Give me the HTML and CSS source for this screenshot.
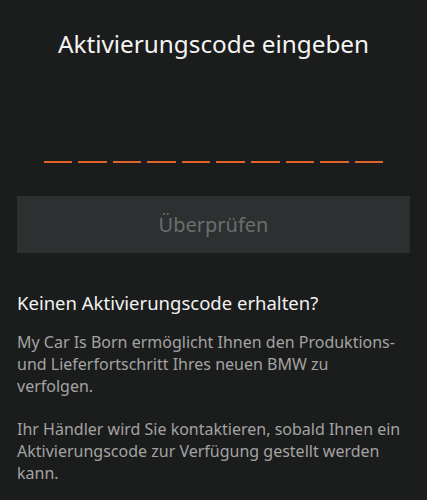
FILE: index.html
```html
<!DOCTYPE html>
<html lang="de">
<head>
    <meta charset="UTF-8">
    <meta name="viewport" content="width=device-width, initial-scale=1.0">
    <title>Aktivierungscode eingeben</title>
    <link rel="stylesheet" href="styles.css">
</head>
<body>
    <div class="screen">
        <h1 class="title">Aktivierungscode eingeben</h1>

        <div class="code-input">
            <span class="slot"></span>
            <span class="slot"></span>
            <span class="slot"></span>
            <span class="slot"></span>
            <span class="slot"></span>
            <span class="slot"></span>
            <span class="slot"></span>
            <span class="slot"></span>
            <span class="slot"></span>
            <span class="slot"></span>
        </div>

        <button class="verify-button" disabled>Überprüfen</button>

        <h2 class="help-title">Keinen Aktivierungscode erhalten?</h2>
        <p class="help-text">My Car Is Born ermöglicht Ihnen den Produktions- und Lieferfortschritt Ihres neuen BMW zu verfolgen.</p>
        <p class="help-text">Ihr Händler wird Sie kontaktieren, sobald Ihnen ein Aktivierungscode zur Verfügung gestellt werden kann.</p>
    </div>
</body>
</html>
```

FILE: styles.css
```css
body {
    margin: 0;
    padding: 0;
    background-color: #1b1c1c;
    font-family: "Noto Sans", "Liberation Sans", sans-serif;
}
.screen {
    padding: 0 17px;
}
.title {
    margin: 0;
    padding-top: 28px;
    font-size: 24.3px;
    font-weight: normal;
    line-height: 32px;
    color: #f4f4f4;
    text-align: center;
}
.code-input {
    display: flex;
    gap: 6px;
    width: 340px;
    margin: 101px auto 0;
}
.slot {
    flex: 1;
    height: 2px;
    background-color: #e0642a;
}
.verify-button {
    display: block;
    width: 100%;
    height: 57px;
    margin-top: 33px;
    border: none;
    background-color: #2d3030;
    color: #6b6e6e;
    font-family: inherit;
    font-size: 20px;
}
.help-title {
    margin: 38px 0 0;
    font-size: 18.5px;
    font-weight: normal;
    line-height: 24px;
    color: #f2f2f2;
}
.help-text {
    margin: 16px 6px 0 0;
    font-size: 16px;
    line-height: 22px;
    color: #a3a3a3;
}
.help-text + .help-text {
    margin-top: 21px;
}
```
